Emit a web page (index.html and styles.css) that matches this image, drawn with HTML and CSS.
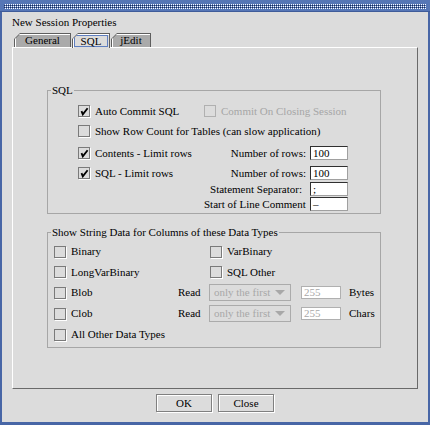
FILE: index.html
```html
<!DOCTYPE html>
<html>
<head>
<meta charset="utf-8">
<title>New Session Properties</title>
<link rel="stylesheet" href="styles.css">
</head>
<body>
<div class="window">
  <div class="titlebar"><div class="grip"></div></div>
  <div class="main">
    <div class="dialog-title">New Session Properties</div>
    <div class="tabs">
      <div class="tab tab-general"><div class="tab-face">General</div></div>
      <div class="tab tab-sql tab-selected"><div class="tab-face"><span class="focus">SQL</span></div></div>
      <div class="tab tab-jedit"><div class="tab-face">jEdit</div></div>
    </div>
    <div class="panel">
      <fieldset class="group group-sql">
        <legend>SQL</legend>
        <div class="sql-rows">
          <div class="srow">
            <label class="check"><span class="box"><svg viewBox="0 0 10 10" width="10" height="10"><path d="M2.5 5.2 L3.8 8.4 L8.6 2.2" fill="none" stroke="#000" stroke-width="1.8"/></svg></span>Auto Commit SQL</label>
            <label class="check check-disabled span2"><span class="box"></span>Commit On Closing Session</label>
          </div>
          <div class="srow srow-2">
            <label class="check span3"><span class="box"></span>Show Row Count for Tables (can slow application)</label>
          </div>
          <div class="srow srow-3">
            <label class="check"><span class="box"><svg viewBox="0 0 10 10" width="10" height="10"><path d="M2.5 5.2 L3.8 8.4 L8.6 2.2" fill="none" stroke="#000" stroke-width="1.8"/></svg></span>Contents - Limit rows</label>
            <span class="flabel">Number of rows:</span>
            <span class="field">100</span>
          </div>
          <div class="srow srow-4">
            <label class="check"><span class="box"><svg viewBox="0 0 10 10" width="10" height="10"><path d="M2.5 5.2 L3.8 8.4 L8.6 2.2" fill="none" stroke="#000" stroke-width="1.8"/></svg></span>SQL - Limit rows</label>
            <span class="flabel">Number of rows:</span>
            <span class="field">100</span>
          </div>
          <div class="srow srow-5">
            <span class="flabel flabel-wide">Statement Separator:</span>
            <span class="field">;</span>
          </div>
          <div class="srow srow-6">
            <span class="flabel flabel-wide">Start of Line Comment</span>
            <span class="field">&#8211;</span>
          </div>
        </div>
      </fieldset>
      <fieldset class="group group-types">
        <legend>Show String Data for Columns of these Data Types</legend>
        <div class="type-grid">
          <label class="check"><span class="box"></span>Binary</label>
          <label class="check col-c"><span class="box"></span>VarBinary</label>

          <label class="check"><span class="box"></span>LongVarBinary</label>
          <label class="check col-c"><span class="box"></span>SQL Other</label>

          <label class="check"><span class="box"></span>Blob</label>
          <span class="read">Read</span>
          <span class="combo">only the first<span class="arrow"></span></span>
          <span class="field field-disabled">255</span>
          <span class="unit">Bytes</span>

          <label class="check"><span class="box"></span>Clob</label>
          <span class="read">Read</span>
          <span class="combo">only the first<span class="arrow"></span></span>
          <span class="field field-disabled">255</span>
          <span class="unit">Chars</span>

          <label class="check"><span class="box"></span>All Other Data Types</label>
        </div>
      </fieldset>
    </div>
    <div class="buttons">
      <button class="btn">OK</button>
      <button class="btn">Close</button>
    </div>
  </div>
</div>
</body>
</html>
```

FILE: styles.css
```css
* { box-sizing: border-box; }

html, body {
  margin: 0;
  padding: 0;
}

body {
  width: 430px;
  height: 425px;
  overflow: hidden;
  background: #dcdcdc;
  font-family: "Liberation Serif", "Times New Roman", serif;
  font-size: 11px;
  line-height: 13px;
  color: #000;
}

.window {
  width: 430px;
  height: 425px;
  display: flex;
  flex-direction: column;
  background: #dcdcdc;
  border-left: 2px solid #4866a6;
  border-right: 2px solid #4866a6;
  border-bottom: 3px solid #4866a6;
}

.titlebar {
  height: 12px;
  margin: 0 -2px;
  padding: 4px 4px 3px 4px;
  background: #5676b6;
  border-bottom: 1px solid #3f5c9a;
}

.grip {
  height: 5px;
  background-color: #5676b6;
  background-image: repeating-conic-gradient(#ffffff 0 25%, #5676b6 0 50%, #1c2c58 0 75%, #5676b6 0 100%);
  background-size: 2px 2px;
}

.main {
  flex: 1;
  display: flex;
  flex-direction: column;
  padding: 0 10px;
}

.dialog-title {
  margin-top: 4px;
  height: 13px;
}

.tabs {
  display: flex;
  gap: 1px;
  margin-top: 4px;
  padding-left: 2px;
  height: 14px;
  position: relative;
  z-index: 1;
}

.tab {
  height: 14px;
  padding: 1px 1px 0 1px;
  background: #5e5e5e;
  clip-path: polygon(0 100%, 0 6px, 6px 0, 100% 0, 100% 100%);
}

.tab-general { width: 57px; }
.tab-sql { width: 38px; }
.tab-jedit { width: 40px; }

.tab-face {
  height: 13px;
  background: #aaaaaa;
  box-shadow: inset 1px 1px 0 #ffffff;
  clip-path: polygon(0 100%, 0 5px, 5px 0, 100% 0, 100% 100%);
  text-align: center;
  line-height: 13px;
}

.tab-selected {
  height: 15px;
}

.tab-selected .tab-face {
  height: 14px;
  background: #dcdcdc;
  padding: 1px 1px 0 1px;
}

.focus {
  display: block;
  height: 12px;
  line-height: 11px;
  border: 1px solid #5f7fc0;
}

.panel {
  height: 342px;
  border: 1px solid;
  border-color: #ffffff #6a6a6a #6a6a6a #ffffff;
  padding: 0 36px 0 34px;
}

.group {
  margin: 0;
  padding: 0;
  min-width: 0;
  border: 1px solid #a6a6a6;
}

.group legend {
  margin-left: 3px;
  padding: 0 1px;
  height: 12px;
  line-height: 12px;
}

.group-sql {
  margin-top: 36px;
}

.sql-rows {
  display: flex;
  flex-direction: column;
  padding: 8px 0 2px 30px;
}

.srow {
  display: grid;
  grid-template-columns: 126px 102px 42px;
  height: 14px;
  align-items: center;
}

.srow-2 { margin-top: 6px; }
.srow-3 { margin-top: 8px; }
.srow-4 { margin-top: 6px; }
.srow-5 { margin-top: 2px; }
.srow-6 { margin-top: 1px; }

.span2 { grid-column: 2 / 4; }
.span3 { grid-column: 1 / 4; }

.check {
  display: flex;
  align-items: center;
  gap: 5px;
  white-space: nowrap;
}

.box {
  width: 12px;
  height: 12px;
  flex: none;
  display: flex;
  align-items: center;
  justify-content: center;
  border: 1px solid #7a7a7a;
  box-shadow: 1px 1px 0 #ffffff;
  background: #dcdcdc;
}

.check-disabled {
  color: #a6a6a6;
}

.check-disabled .box {
  border-color: #b0b0b0;
  box-shadow: none;
}

.flabel {
  grid-column: 2;
  text-align: right;
  white-space: nowrap;
}

.flabel-wide {
  padding-right: 4px;
}

.field {
  display: block;
  height: 14px;
  width: 38px;
  margin-left: 4px;
  padding-left: 2px;
  line-height: 12px;
  background: #ffffff;
  border: 1px solid;
  border-color: #303030 #a0a0a0 #a0a0a0 #303030;
}

.group-types {
  margin-top: 12px;
}

.type-grid {
  display: grid;
  grid-template-columns: 124px 31px 92px 48px auto;
  grid-template-rows: 21px 20px 21px 21px 21px;
  align-items: center;
  padding: 3px 0 2px 6px;
}

.type-grid > .check:not(.col-c) {
  grid-column: 1;
}

.col-c {
  grid-column: 3 / 6;
  padding-left: 1px;
}

.read {
  grid-column: 2;
}

.combo {
  grid-column: 3;
  width: 82px;
  height: 17px;
  display: flex;
  align-items: center;
  justify-content: space-between;
  padding: 0 5px 0 4px;
  border: 1px solid #ababab;
  color: #a8a8a8;
  white-space: nowrap;
}

.arrow {
  width: 0;
  height: 0;
  border-left: 5px solid transparent;
  border-right: 5px solid transparent;
  border-top: 5px solid #a8a8a8;
}

.type-grid .field {
  grid-column: 4;
  margin-left: 0;
}

.field-disabled {
  width: 40px;
  height: 13px;
  padding-left: 2px;
  line-height: 11px;
  color: #a8a8a8;
  border-color: #b0b0b0;
}

.unit {
  grid-column: 5;
}

.buttons {
  display: flex;
  justify-content: center;
  gap: 6px;
  margin-top: 5px;
}

.btn {
  width: 56px;
  height: 18px;
  padding: 0;
  font: inherit;
  color: #000;
  background: #dcdcdc;
  border: 1px solid #808080;
  box-shadow: inset 1px 1px 0 #ffffff, 1px 1px 0 #ffffff;
  border-radius: 0;
}
```
